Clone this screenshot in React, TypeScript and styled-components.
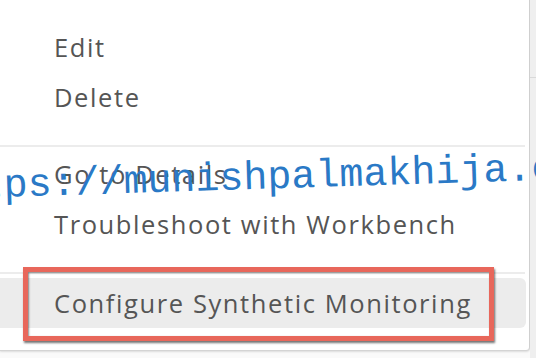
import React from "react";
import styled, { createGlobalStyle } from "styled-components";

// 메뉴 데이터

interface MenuItem {
  label: string;
  active?: boolean;
}

const groups: { items: MenuItem[]; pad: string }[] = [
  { items: [{ label: "Edit" }, { label: "Delete" }], pad: "22px 0 23px" },
  {
    items: [{ label: "Go to Details" }, { label: "Troubleshoot with Workbench" }],
    pad: "2px 0 23px",
  },
  { items: [{ label: "Configure Synthetic Monitoring", active: true }], pad: "4px 0 22px" },
];

const App: React.FC = () => {
  return (
    <>
      <GlobalStyle />
      <Page>
        <Menu>
          {groups.map((group, gi) => (
            <React.Fragment key={gi}>
              {gi > 0 && <Divider />}
              <Group $pad={group.pad}>
                {group.items.map((item) => (
                  <Item key={item.label} $active={item.active}>
                    {item.label}
                    {item.active && <Highlight />}
                  </Item>
                ))}
              </Group>
            </React.Fragment>
          ))}
        </Menu>
        <Side>
          <SideHeader />
        </Side>
        <Watermark>https://munishpalmakhija.com</Watermark>
      </Page>
    </>
  );
};

// Styled-components

const GlobalStyle = createGlobalStyle`
  html, body {
    margin: 0;
    padding: 0;
    background: #fafafa;
  }
`;

const Page = styled.div`
  position: relative;
  display: flex;
  width: 536px;
  height: 358px;
  overflow: hidden;
  background: #fafafa;
  font-family: "Open Sans", "Noto Sans", sans-serif;
`;

const Menu = styled.div`
  align-self: flex-start;
  width: 526px;
  padding-right: 3px;
  background: #fff;
  border-right: 1px solid #cfcfcf;
  border-bottom: 1px solid #d4d4d4;
  border-bottom-right-radius: 4px;
  box-shadow: 0 1px 2px rgba(0, 0, 0, 0.12);
`;

const Group = styled.div<{ $pad: string }>`
  padding: ${(p) => p.$pad};
`;

const Divider = styled.div`
  height: 2px;
  margin-right: 1px;
  background: #ececec;
`;

const Item = styled.div<{ $active?: boolean }>`
  position: relative;
  display: flex;
  align-items: center;
  height: 50px;
  padding-left: 54px;
  font-size: 25.5px;
  letter-spacing: 1.6px;
  color: #555555;
  background: ${(p) => (p.$active ? "#ececec" : "transparent")};
  border-radius: 0 6px 6px 0;
`;

const Highlight = styled.div`
  position: absolute;
  left: 23px;
  top: -11px;
  width: 471px;
  height: 74px;
  box-sizing: border-box;
  border: 5px solid #e8675b;
  box-shadow: 1px 2px 2px rgba(0, 0, 0, 0.55),
    inset 1px 1px 2px rgba(0, 0, 0, 0.45);
`;

const Side = styled.div`
  flex: 1;
  align-self: stretch;
  background: #efefef;
`;

const SideHeader = styled.div`
  height: 77px;
  border-bottom: 1px solid #d9d9d9;
`;

const Watermark = styled.div`
  position: absolute;
  left: -69px;
  top: 169px;
  font-family: "Liberation Mono", "Courier New", monospace;
  font-size: 40px;
  line-height: 1;
  color: #2a79c6;
  white-space: nowrap;
  transform: rotate(-1.8deg);
  transform-origin: 0 0;
  pointer-events: none;
`;

export default App;
